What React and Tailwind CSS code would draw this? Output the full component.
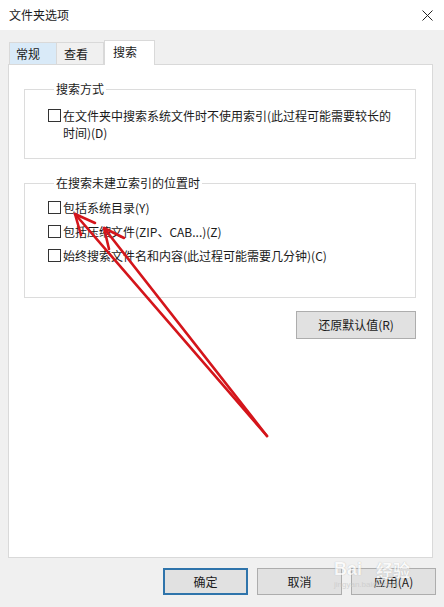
import React from 'react';

function Check({ children }) {
  return (
    <div className="flex items-start gap-[2px]">
      <span className="mt-[2px] w-[13px] h-[13px] shrink-0 border border-[#333] bg-white" />
      <span className="leading-[17px]">{children}</span>
    </div>
  );
}

function Group({ title, className, children }) {
  return (
    <fieldset className={'border border-[#dcdcdc] ' + className}>
      <legend className="ml-[6px] px-[2px] leading-[16px]">{title}</legend>
      {children}
    </fieldset>
  );
}

function Btn({ children, primary }) {
  return (
    <button
      className={
        'w-[85px] h-[27px] bg-[#e1e1e1] leading-none ' +
        (primary ? 'border-2 border-[#2f74ab]' : 'border border-[#adadad]')
      }
    >
      {children}
    </button>
  );
}

export default function App() {
  return (
    <div className="relative w-[444px] h-[607px] bg-[#f0f0f0] text-[12px] text-[#1a1a1a] font-['Noto_Sans_CJK_SC',sans-serif] overflow-hidden">
      {/* title bar */}
      <div className="h-[30px] bg-white flex items-center justify-between pl-[9px] pr-[11px]">
        <span>文件夹选项</span>
        <svg width="11" height="11" viewBox="0 0 11 11">
          <path d="M0.5 0.5 L10.5 10.5 M10.5 0.5 L0.5 10.5" stroke="#222" strokeWidth="1" />
        </svg>
      </div>

      {/* tabs */}
      <div className="mt-[10px] pl-[9px] flex items-end h-[24px] relative z-10">
        <div className="w-[48px] h-[22px] bg-[#d9eaf8] border border-b-0 border-[#d9d9d9] pl-[6px] flex items-center">常规</div>
        <div className="w-[47px] h-[22px] bg-[#f0f0f0] border border-l-0 border-b-0 border-[#d9d9d9] pl-[7px] flex items-center">查看</div>
        <div className="w-[51px] h-[25px] -mb-px bg-white border border-b-0 border-[#d9d9d9] pl-[8px] pb-[3px] flex items-center">搜索</div>
      </div>

      {/* panel */}
      <div className="ml-[8px] w-[425px] h-[494px] bg-white border border-[#d9d9d9] pl-[15px] pr-[16px] pt-[16px] flex flex-col">
        <Group title="搜索方式" className="h-[78px] pl-[23px] pt-[10px]">
          <Check>
            在文件夹中搜索系统文件时不使用索引(此过程可能需要较长的
            <br />
            时间)(D)
          </Check>
        </Group>

        <Group title="在搜索未建立索引的位置时" className="mt-[16px] h-[123px] pl-[23px] pt-[8px]">
          <div className="flex flex-col gap-[7px]">
            <Check>包括系统目录(Y)</Check>
            <Check>包括压缩文件(ZIP、CAB...)(Z)</Check>
            <Check>始终搜索文件名和内容(此过程可能需要几分钟)(C)</Check>
          </div>
        </Group>

        <div className="mt-[13px] flex justify-end">
          <button className="w-[120px] h-[28px] bg-[#e1e1e1] border border-[#adadad] leading-none">
            还原默认值(R)
          </button>
        </div>
      </div>

      {/* bottom buttons */}
      <div className="mt-[10px] pr-[8px] flex justify-end gap-[9px]">
        <Btn primary>确定</Btn>
        <Btn>取消</Btn>
        <Btn>应用(A)</Btn>
      </div>

      {/* watermark */}
      <div className="absolute left-[334px] top-[560px] pointer-events-none flex flex-col items-start opacity-70">
        <div className="flex items-end gap-[14px] text-[#ffffff] [text-shadow:0_0_1px_#9a9a9a]">
          <span className="text-[18px] font-bold font-['Liberation_Sans',sans-serif] leading-none">Bai</span>
          <span className="text-[17px] font-bold leading-none">经验</span>
        </div>
        <span className="text-[8px] text-[#c8c8c8] leading-none mt-[3px] font-['Liberation_Sans',sans-serif]">jingyan.baidu.com</span>
      </div>

      {/* red annotation arrows */}
      <svg className="absolute inset-0 pointer-events-none" width="444" height="607" viewBox="0 0 444 607">
        <g stroke="#d4151b" strokeWidth="2.6" fill="none" strokeLinecap="round" strokeLinejoin="round">
          <path d="M267 436 L75 214" />
          <path d="M95 223 L75 214 L81 235" />
          <path d="M267 436 L104 228" />
          <path d="M124 238 L104 228 L109 249" />
        </g>
      </svg>
    </div>
  );
}
